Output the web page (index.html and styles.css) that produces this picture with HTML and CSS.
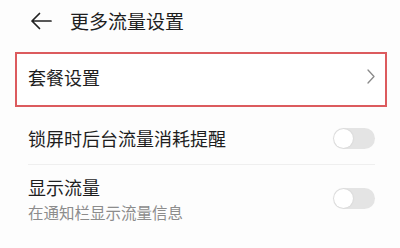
FILE: index.html
```html
<!DOCTYPE html>
<html lang="zh-CN">

<head>
  <meta charset="UTF-8">
  <meta name="viewport" content="width=device-width, initial-scale=1.0">
  <title>更多流量设置</title>
  <link rel="stylesheet" href="styles.css">
</head>

<body>
  <div class="page">
    <div class="header">
      <svg class="back" width="22" height="18" viewBox="0 0 22 18">
        <path d="M21 9H2M9.5 1.5L2 9l7.5 7.5" fill="none" stroke="#222" stroke-width="1.7" stroke-linecap="round" stroke-linejoin="round"/>
      </svg>
      <span class="title">更多流量设置</span>
    </div>

    <div class="item highlight">
      <span class="label">套餐设置</span>
      <svg class="chevron" width="8" height="15" viewBox="0 0 8 15">
        <path d="M1 1l6 6.5L1 14" fill="none" stroke="#8a8a8a" stroke-width="1.3" stroke-linecap="round" stroke-linejoin="round"/>
      </svg>
    </div>

    <div class="row first">
      <span class="label">锁屏时后台流量消耗提醒</span>
      <div class="switch"><span class="knob"></span></div>
    </div>
    <div class="divider"></div>
    <div class="row second">
      <div class="text">
        <div class="label">显示流量</div>
        <div class="sub">在通知栏显示流量信息</div>
      </div>
      <div class="switch"><span class="knob"></span></div>
    </div>
  </div>
</body>

</html>
```

FILE: styles.css
```css
* {
  margin: 0;
  padding: 0;
  box-sizing: border-box;
}

body {
  background: #fdfdfd;
  font-family: "Noto Sans CJK SC", "Noto Sans", sans-serif;
  color: #1e1e1e;
}

.page {
  width: 400px;
  height: 248px;
  overflow: hidden;
}

.header {
  height: 40px;
  display: flex;
  align-items: center;
  padding-left: 30px;
  padding-top: 1px;
}

.back {
  margin-right: 18px;
}

.title {
  font-size: 19px;
  line-height: 24px;
}

.label {
  font-size: 18px;
  line-height: 24px;
}

/* 套餐设置，外面有红框 */
.item {
  display: flex;
  align-items: center;
  justify-content: space-between;
  height: 55px;
  margin: 12px 13px 0 15px;
  padding: 0 10px 6px 11px;
}

.highlight {
  border: 2px solid #dc5b5e;
  background: #fff;
}

.row {
  display: flex;
  align-items: center;
  justify-content: space-between;
  padding: 0 25px 0 28px;
}

.row.first {
  height: 57px;
  padding-top: 5px;
}

.row.second {
  padding-top: 10px;
}

.divider {
  height: 1px;
  margin: 0 25px 0 28px;
  background: #efefef;
}

.sub {
  font-size: 15.5px;
  line-height: 20px;
  margin-top: 3px;
  color: #8c8c8c;
}

.switch {
  width: 42px;
  height: 21px;
  border-radius: 11px;
  background: #e4e4e4;
  padding: 1px;
}

.knob {
  display: block;
  width: 19px;
  height: 19px;
  border-radius: 50%;
  background: #fff;
  box-shadow: 0 0 2px rgba(0, 0, 0, .12);
}
```
